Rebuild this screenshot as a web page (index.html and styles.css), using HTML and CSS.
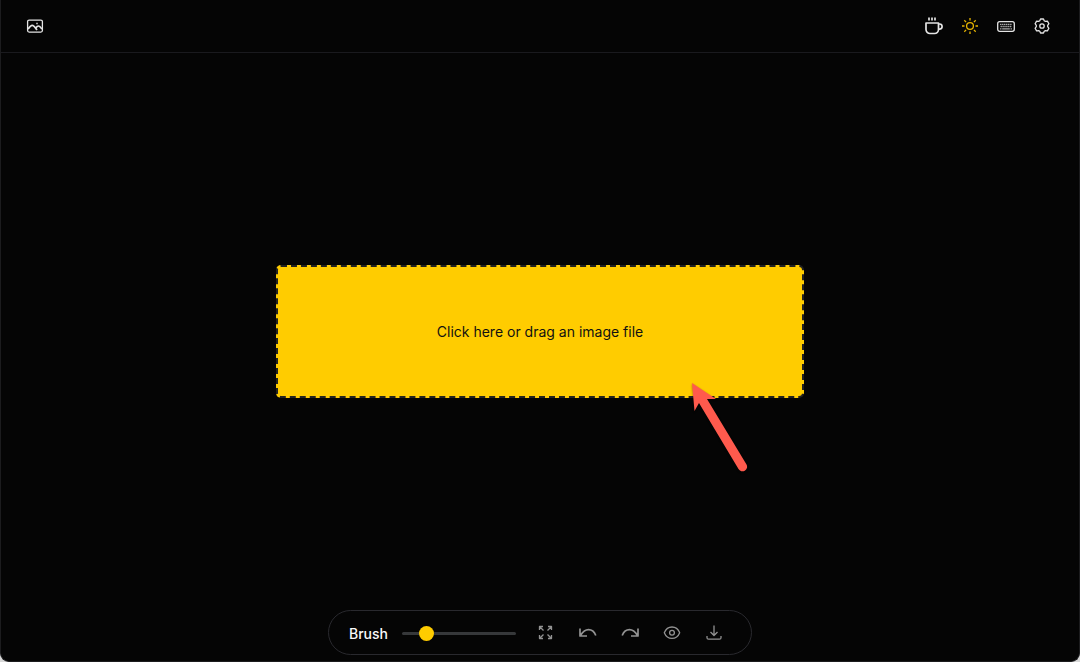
FILE: index.html
```html
<!DOCTYPE html>
<html lang="en">

<head>
    <meta charset="UTF-8">
    <meta name="viewport" content="width=device-width, initial-scale=1.0">
    <title>Image editor</title>
    <link rel="stylesheet" href="styles.css">
</head>

<body>
    <div class="app">
        <header class="header">
            <button class="icon-btn" type="button" aria-label="Upload image">
                <svg width="18" height="18" viewBox="0 0 18 18">
                    <rect x="1.6" y="3.1" width="14.8" height="12" rx="1.5" />
                    <path class="bold" d="M2 12C3.500 10 5 8.300 6.200 8.300S9 10 11 13M9.800 11c1-1.500 1.800-2 2.700-2s2 1 3.500 3" />
                    <path d="M10.300 6.500h1.400" />
                </svg>
            </button>
            <nav class="header-actions">
                <a class="icon-btn" href="#coffee" aria-label="Buy me a coffee">
                    <svg class="bold" width="18" height="18" viewBox="0 0 18 18">
                        <path d="M4 .5v3M7 .5v3M10 .5v3" />
                        <path d="M1 6h12.500v6.500a4 4 0 0 1-4 4H5a4 4 0 0 1-4-4z" />
                        <path d="M13.500 7h1a2.600 2.600 0 0 1 0 5.200h-1" />
                    </svg>
                </a>
                <button class="icon-btn sun" type="button" aria-label="Toggle theme">
                    <svg width="18" height="18" viewBox="0 0 18 18">
                        <circle cx="9" cy="9" r="3.400" />
                        <path d="M9 1v2.500M9 14.500V17M1 9h2.500M14.500 9H17M3.300 3.300l1.800 1.800M12.900 12.900l1.800 1.800M3.300 14.700l1.800-1.800M12.900 5.100l1.800-1.800" />
                    </svg>
                </button>
                <button class="icon-btn" type="button" aria-label="Keyboard shortcuts">
                    <svg width="18" height="18" viewBox="0 0 18 18">
                        <rect x=".7" y="4.700" width="16.600" height="9.600" rx="2" />
                        <path class="keys" d="M3 7.300h12M3.500 9.500h11" stroke-dasharray="1.400 .5" />
                        <path class="keys" d="M3 11.800h1.500M5.200 11.800h7.600M13.500 11.800H15" />
                    </svg>
                </button>
                <button class="icon-btn" type="button" aria-label="Settings">
                    <svg width="18" height="18" viewBox="0 0 18 18">
                        <path d="M7.500 2h3l.7 1.700 1.200.7 2-.3 1.500 2.600L14.700 8.300v1.400l1.200 1.600-1.500 2.600-2-.3-1.200.7-.7 1.700h-3l-.7-1.700-1.200-.7-2 .3-1.500-2.600 1.200-1.600V8.300L2.100 6.700l1.500-2.600 2 .3 1.200-.7z" />
                        <circle cx="9" cy="9" r="2.200" />
                    </svg>
                </button>
            </nav>
        </header>

        <main class="main">
            <div class="upload">
                <label class="dropzone" for="file">Click here or drag an image file</label>
                <input class="file-input" id="file" type="file" accept="image/*">
                <svg class="pointer" width="60" height="92" viewBox="0 0 60 92">
                    <path d="M2 2 26 18 17 18 56.500 83.500A4.500 4.500 0 0 1 48.500 88L9 22 4.500 30z" />
                </svg>
            </div>
        </main>

        <footer class="toolbar">
            <label class="brush" for="brush">Brush</label>
            <input class="slider" id="brush" type="range" min="0" max="100" value="17">
            <div class="tools">
                <button class="icon-btn" type="button" aria-label="Reset zoom">
                    <svg width="18" height="18" viewBox="0 0 18 18">
                        <path d="M2.500 6V2.500H6M2.500 2.500l4 4M11 2.500h3.500V6M14.500 2.500l-4 4M2.500 11v3.500H6M2.500 14.500l4-4M11 14.500h3.500V11M14.500 14.500l-4-4" />
                    </svg>
                </button>
                <button class="icon-btn" type="button" aria-label="Undo">
                    <svg class="bold" width="18" height="18" viewBox="0 0 18 18">
                        <path d="M1 4.500V12h7M1.500 11.500C4 7.500 6.500 5.700 9.500 5.700c3.500 0 5.800 2 7.300 5.800" />
                    </svg>
                </button>
                <button class="icon-btn" type="button" aria-label="Redo">
                    <svg class="bold" width="18" height="18" viewBox="0 0 18 18">
                        <path d="M17 4.500V12h-7M16.500 11.500C14 7.500 11.500 5.700 8.500 5.700c-3.500 0-5.800 2-7.300 5.800" />
                    </svg>
                </button>
                <button class="icon-btn" type="button" aria-label="Show original">
                    <svg width="18" height="18" viewBox="0 0 18 18">
                        <path d="M1.300 8.700C2.800 5 5.500 3 9 3s6.200 2 7.700 5.700c-1.500 3.700-4.200 5.700-7.700 5.700S2.800 12.400 1.300 8.700z" />
                        <circle cx="9" cy="8.700" r="2.400" />
                    </svg>
                </button>
                <button class="icon-btn" type="button" aria-label="Download">
                    <svg width="18" height="18" viewBox="0 0 18 18">
                        <path d="M9 1.500v9.500M5.500 8 9 11.500 12.500 8M2 12v1.700a1.500 1.500 0 0 0 1.500 1.500h11a1.500 1.500 0 0 0 1.500-1.500V12" />
                    </svg>
                </button>
            </div>
        </footer>
    </div>
</body>

</html>
```

FILE: styles.css
```css
* {
    margin: 0;
    padding: 0;
    box-sizing: border-box;
}

body {
    background-color: #d8d8d8;
    color: #fafafa;
    font-family: Inter, "Liberation Sans", sans-serif;
    font-size: 14px;
}

.app {
    display: flex;
    flex-direction: column;
    min-height: 100vh;
    border: 1px solid #1c1c1e;
    border-top: 0;
    border-radius: 0 0 9px 9px;
    background-color: #050505;
}

.header {
    display: flex;
    align-items: center;
    justify-content: space-between;
    padding: 8px 19px 8px 16px;
    border-bottom: 1px solid #1a1a1e;
}

.header-actions,
.tools {
    display: flex;
}

.icon-btn {
    display: flex;
    align-items: center;
    justify-content: center;
    width: 36px;
    height: 36px;
    border: 0;
    background: none;
    color: #e4e4e4;
    cursor: pointer;
}

.icon-btn svg {
    fill: none;
    stroke: currentColor;
    stroke-width: 1.3;
    stroke-linejoin: round;
}

.icon-btn .bold {
    stroke-width: 1.7;
}

.icon-btn .keys {
    stroke: #aaa;
}

.header .sun {
    color: #e6b400;
}

.main {
    display: flex;
    flex: 1;
    align-items: center;
    justify-content: center;
}

.upload {
    position: relative;
    width: 528px;
    max-width: 90%;
}

.dropzone {
    display: flex;
    align-items: center;
    justify-content: center;
    min-height: 133px;
    border: 2px dashed #222;
    border-radius: 5px;
    background-color: #ffcc00;
    color: #111;
    cursor: pointer;
}

.file-input {
    position: absolute;
    width: 1px;
    height: 1px;
    opacity: 0;
}

.pointer {
    position: absolute;
    top: 116px;
    right: 54px;
    fill: #ff5a4d;
    filter: drop-shadow(0 1px 1px rgba(0, 0, 0, 0.4));
    pointer-events: none;
}

.toolbar {
    display: flex;
    align-items: center;
    align-self: center;
    margin-bottom: 6px;
    padding: 4px 19px 3px 20px;
    border: 1px solid #29292e;
    border-radius: 24px;
}

.brush {
    margin-right: 14px;
    font-size: 14px;
    font-weight: 500;
}

.slider {
    width: 114px;
    height: 16px;
    margin-right: 12px;
    background: none;
    appearance: none;
}

.slider::-webkit-slider-runnable-track {
    height: 3px;
    border-radius: 2px;
    background-color: #36383a;
}

.slider::-webkit-slider-thumb {
    width: 15px;
    height: 15px;
    margin-top: -6px;
    border-radius: 50%;
    background-color: #ffcc00;
    appearance: none;
}

.tools {
    gap: 6px;
}

.tools .icon-btn {
    color: #929292;
}
```
